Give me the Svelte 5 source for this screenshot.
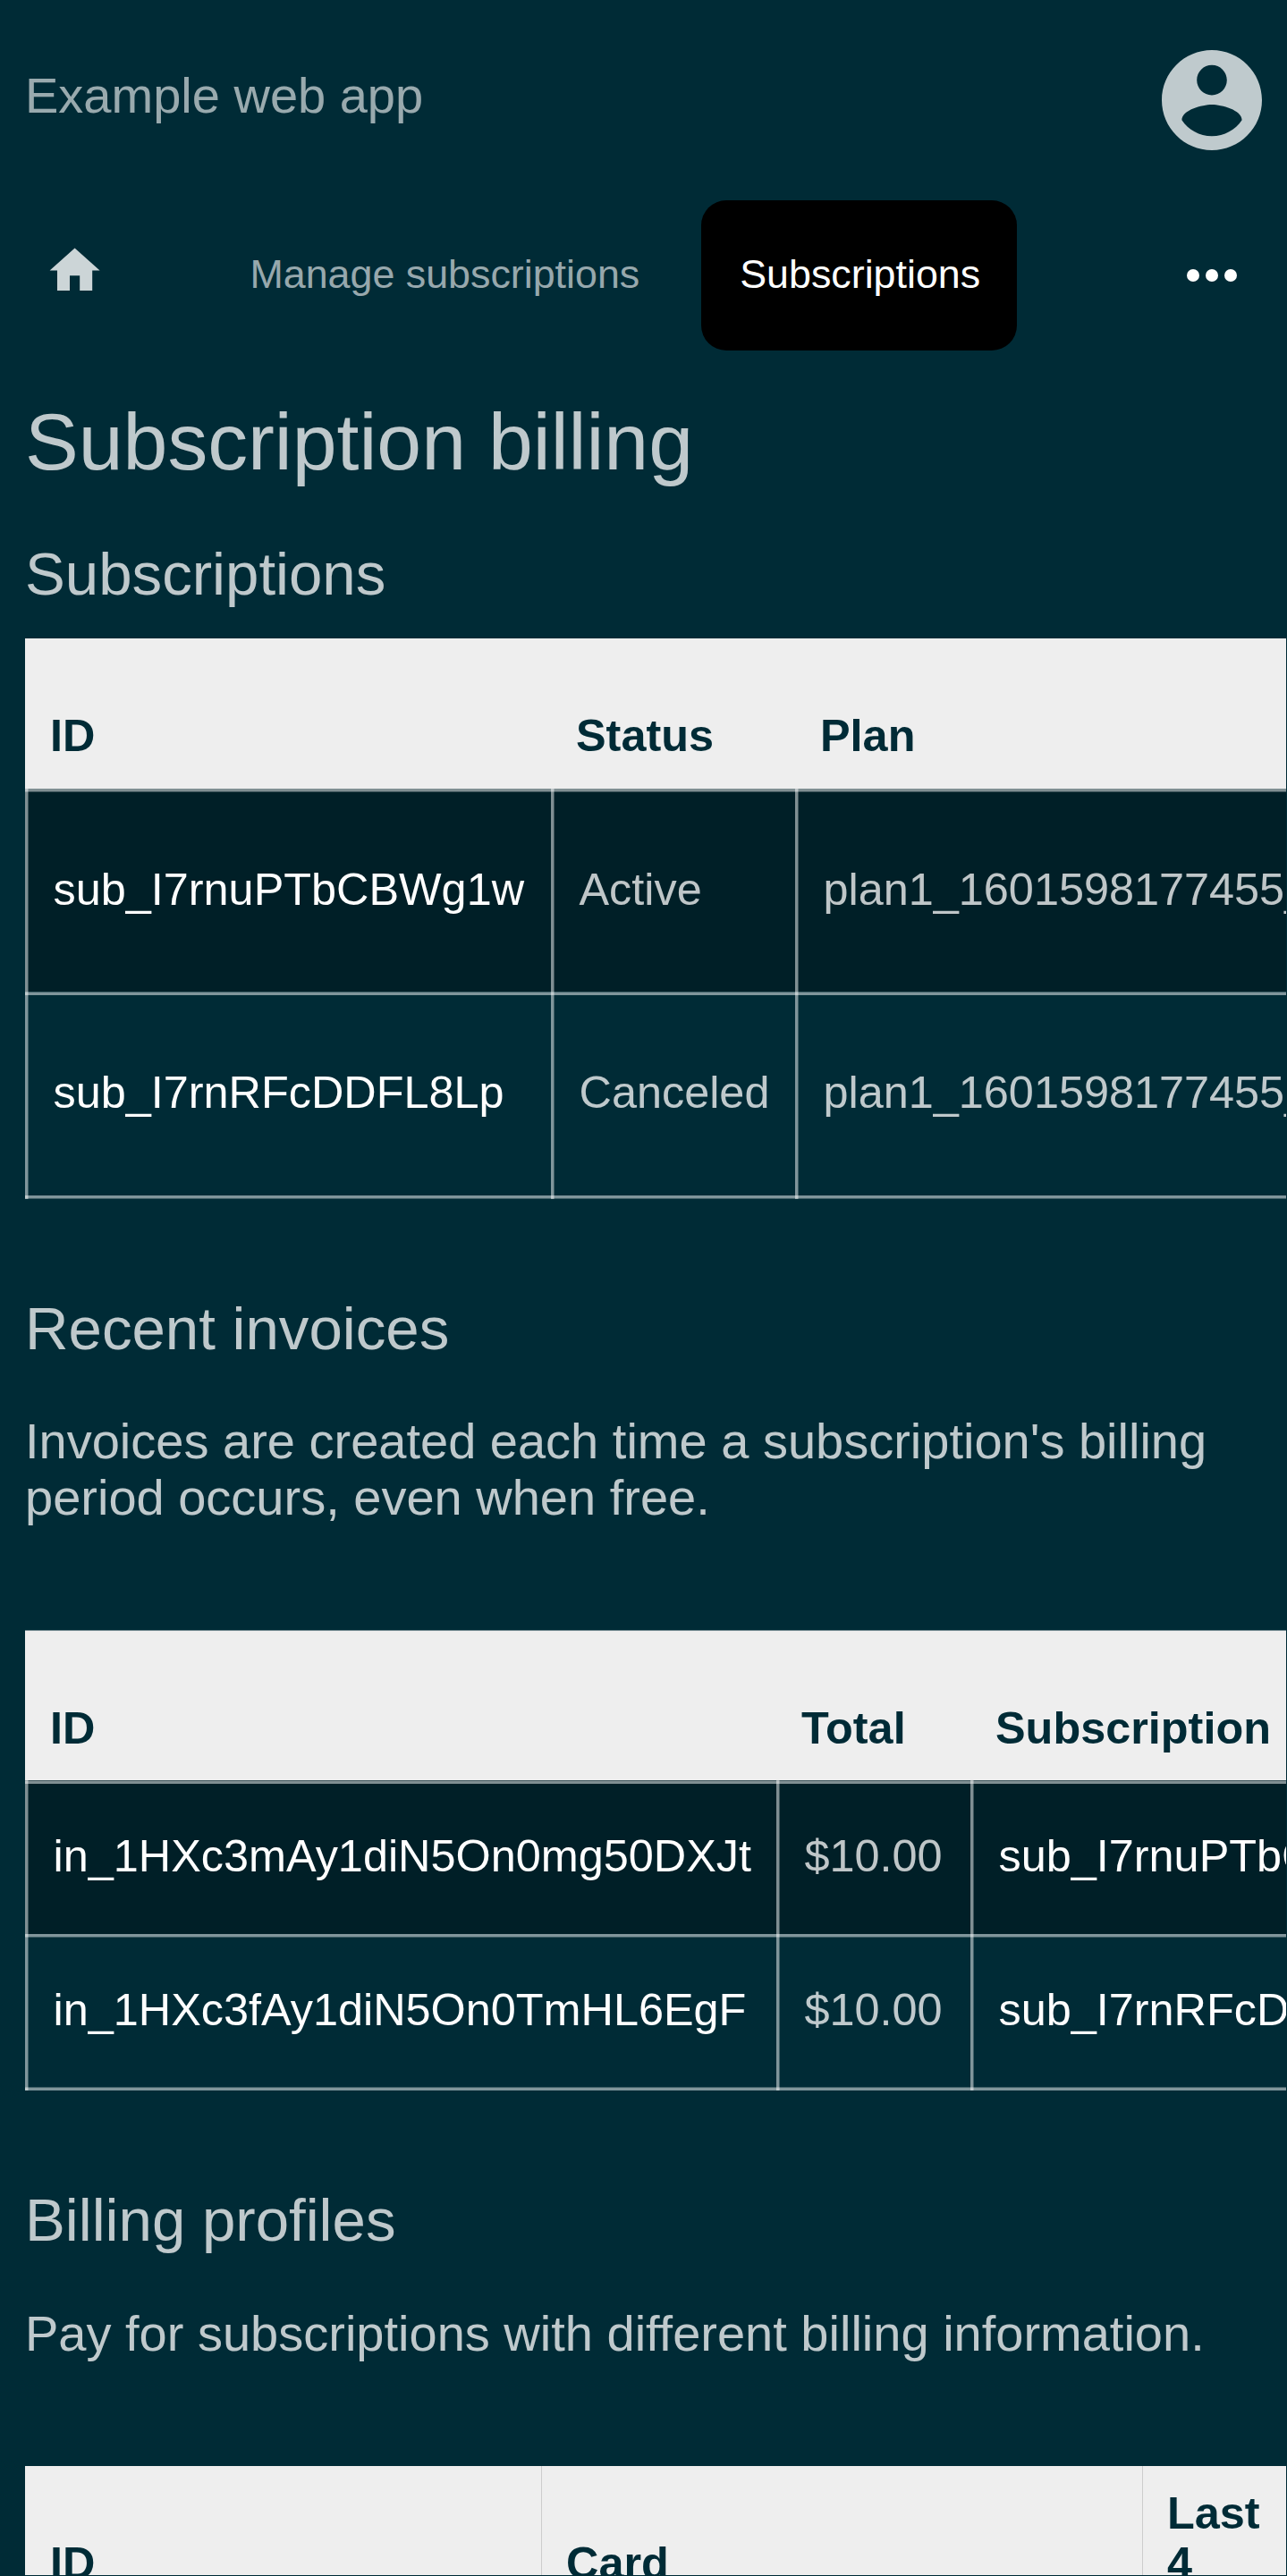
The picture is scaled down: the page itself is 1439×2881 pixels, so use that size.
<script lang="ts">
  const subscriptions = [
    { id: 'sub_I7rnuPTbCBWg1w', status: 'Active', plan: 'plan1_1601598177455_' },
    { id: 'sub_I7rnRFcDDFL8Lp', status: 'Canceled', plan: 'plan1_1601598177455_' },
  ];
  const invoices = [
    { id: 'in_1HXc3mAy1diN5On0mg50DXJt', total: '$10.00', subscription: 'sub_I7rnuPTbCBWg1w' },
    { id: 'in_1HXc3fAy1diN5On0TmHL6EgF', total: '$10.00', subscription: 'sub_I7rnRFcDDFL8Lp' },
  ];
</script>

<div class="page">
  <header>
    <div class="app-title">Example web app</div>
    <svg class="avatar" viewBox="2 2 20 20" aria-label="Account">
      <path d="M12 2C6.48 2 2 6.48 2 12s4.48 10 10 10 10-4.48 10-10S17.52 2 12 2zm0 3c1.66 0 3 1.34 3 3s-1.34 3-3 3-3-1.34-3-3 1.34-3 3-3zm0 14.2c-2.5 0-4.71-1.28-6-3.22.03-1.99 4-3.08 6-3.08 1.99 0 5.97 1.09 6 3.08-1.29 1.94-3.5 3.22-6 3.22z" />
    </svg>
  </header>

  <nav>
    <svg class="home" viewBox="0 0 24 24" aria-label="Home">
      <path d="M10 20v-6h4v6h5v-8h3L12 3 2 12h3v8z" />
    </svg>
    <span class="item">Manage subscriptions</span>
    <span class="item active">Subscriptions</span>
    <svg class="more" viewBox="0 0 16 4" aria-label="More">
      <circle cx="2" cy="2" r="2" /><circle cx="8" cy="2" r="2" /><circle cx="14" cy="2" r="2" />
    </svg>
  </nav>

  <main>
    <h1>Subscription billing</h1>

    <section class="first">
      <h2>Subscriptions</h2>
      <table class="subscriptions">
        <colgroup><col class="sub-id" /><col class="sub-status" /><col class="sub-plan" /></colgroup>
        <thead><tr><th>ID</th><th>Status</th><th>Plan</th></tr></thead>
        <tbody>
          {#each subscriptions as row}
            <tr><td class="link">{row.id}</td><td>{row.status}</td><td>{row.plan}</td></tr>
          {/each}
        </tbody>
      </table>
    </section>

    <section>
      <h2>Recent invoices</h2>
      <p>Invoices are created each time a subscription's billing period occurs, even when free.</p>
      <table class="invoices">
        <colgroup><col class="inv-id" /><col class="inv-total" /><col class="inv-sub" /></colgroup>
        <thead><tr><th>ID</th><th>Total</th><th>Subscription</th></tr></thead>
        <tbody>
          {#each invoices as row}
            <tr><td class="link">{row.id}</td><td>{row.total}</td><td class="link">{row.subscription}</td></tr>
          {/each}
        </tbody>
      </table>
    </section>

    <section>
      <h2>Billing profiles</h2>
      <p class="short">Pay for subscriptions with different billing information.</p>
      <table class="profiles">
        <colgroup><col class="pro-id" /><col class="pro-card" /><col class="pro-last" /></colgroup>
        <thead><tr><th>ID</th><th>Card</th><th>Last<br />4</th></tr></thead>
      </table>
    </section>
  </main>
</div>

<style>
  :global(body) {
    background: #002b36;
    overflow: hidden;
  }
  .page {
    width: 1438px;
    height: 2880px;
    overflow: hidden;
    background: #002b36;
    color: rgba(255, 255, 255, 0.75);
    font-family: 'Liberation Sans', Arial, sans-serif;
    font-size: 56px;
    line-height: 63px;
  }
  svg {
    display: block;
    flex: none;
  }
  header {
    display: flex;
    justify-content: space-between;
    align-items: flex-start;
    box-sizing: border-box;
    height: 224px;
    padding: 56px 27.5px 0 28px;
  }
  .app-title {
    padding-top: 19px;
    color: rgba(255, 255, 255, 0.6);
  }
  .avatar {
    width: 112px;
    height: 112px;
    fill: #bfcacd;
  }
  nav {
    display: flex;
    align-items: center;
    height: 168px;
    padding: 0 55.5px 0 50.4px;
    font-size: 44.8px;
  }
  .home {
    width: 67.2px;
    height: 67.2px;
    margin: 0 118.4px 11px 0;
    fill: #ccd5d7;
  }
  .item {
    height: 168px;
    padding: 0 41px 0 43.5px;
    border-radius: 28px;
    line-height: 165px;
    color: rgba(255, 255, 255, 0.6);
    white-space: nowrap;
  }
  .active {
    margin-left: 27.5px;
    background: #000;
    color: #fff;
  }
  .more {
    width: 56px;
    height: 14px;
    margin-left: auto;
    fill: #fff;
  }
  main {
    padding: 51px 0 0 28px;
  }
  h1,
  h2,
  p {
    margin: 0;
    font-weight: 400;
  }
  h1 {
    font-size: 89.6px;
    line-height: 102px;
  }
  section {
    padding-top: 106px;
  }
  .first {
    padding-top: 58px;
  }
  h2 {
    font-size: 67.2px;
    line-height: 77px;
  }
  p {
    padding-right: 28px;
    margin: 56px 0 117px;
  }
  .short {
    margin-top: 57px;
  }
  table {
    table-layout: fixed;
    border-collapse: separate;
    border-spacing: 0;
    font-size: 50.4px;
    line-height: 56px;
    text-align: left;
    white-space: nowrap;
  }
  .subscriptions {
    width: 1500px;
    margin-top: 34px;
  }
  .invoices {
    width: 1500px;
  }
  .profiles {
    width: 1410px;
  }
  .sub-id { width: 588px; }
  .sub-status { width: 273px; }
  .inv-id { width: 840px; }
  .inv-total { width: 217px; }
  .pro-id { width: 577px; }
  .pro-card { width: 672px; }
  th {
    box-sizing: border-box;
    height: 168px;
    padding: 0 28px 31.5px;
    background: #eee;
    color: #002b36;
    font-weight: 700;
    vertical-align: bottom;
  }
  .invoices th {
    padding-bottom: 30.5px;
    background: linear-gradient(#778c92 1px, #eee 1px);
  }

  /* Grid lines are 3.5px: three solid pixels and one at half strength. */
  td {
    --on: rgba(255, 255, 255, 0.5);
    --half: rgba(255, 255, 255, 0.25);
    --side: linear-gradient(to right, var(--on) 3px, var(--half) 3px);
    --fade-end: linear-gradient(var(--on) 3px, var(--half) 3px);
    --fade-start: linear-gradient(var(--half) 1px, var(--on) 1px);
    padding: 57px 28px 59px 31.5px;
    background-image: var(--side), var(--top), var(--bottom, none);
    background-size: 4px 100%, 100% 4px, 100% 4px;
    background-position: 0 0, 0 0, 0 100%;
    background-repeat: no-repeat;
  }
  .subscriptions td {
    --top: var(--fade-end);
    padding-top: 84.5px;
    padding-bottom: 86.5px;
  }
  .subscriptions tr:last-child td {
    --top: var(--fade-start);
    --bottom: var(--fade-end);
    padding-top: 85px;
    padding-bottom: 91px;
  }
  .invoices td {
    --top: var(--fade-start);
  }
  .invoices tr:last-child td {
    --top: var(--fade-end);
    --bottom: var(--fade-start);
    padding-bottom: 62px;
  }
  tbody tr:nth-child(odd) {
    background-color: #001f27;
  }
  .link {
    color: #fff;
  }
  .profiles th + th {
    border-left: 1px solid #ccc;
    padding-left: 27px;
  }
</style>
